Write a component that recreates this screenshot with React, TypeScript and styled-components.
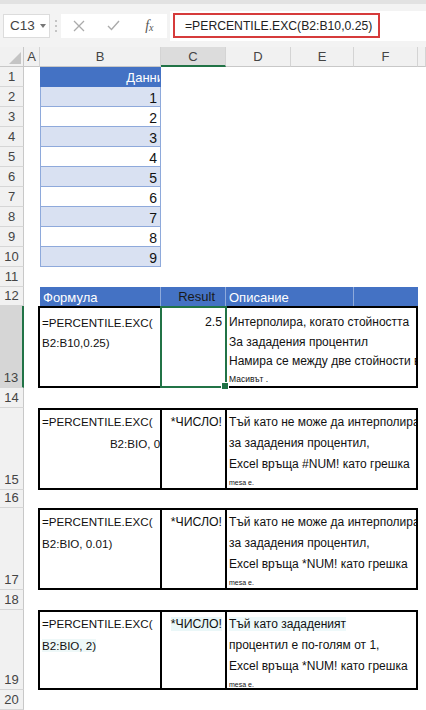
import React from 'react';
import styled, { createGlobalStyle } from 'styled-components';

const GlobalStyle = createGlobalStyle`
  html, body {
    margin: 0;
    padding: 0;
    background: #fff;
  }
  body {
    font-family: "Liberation Sans", Arial, sans-serif;
    overflow: hidden;
  }
`;

const Window = styled.div`
  width: 426px;
  height: 710px;
  overflow: hidden;
  display: flex;
  flex-direction: column;
  background: #fff;
`;

const TopStrip = styled.div`
  flex: none;
  height: 4px;
  background: #e2e2e2;
`;

const FormulaBar = styled.div`
  flex: none;
  height: 43px;
  display: flex;
  align-items: center;
  background: #f3f3f3;
`;

const NameBox = styled.div`
  width: 47px;
  height: 24px;
  margin-left: 3px;
  box-sizing: border-box;
  border: 1px solid #dcdcdc;
  background: #fff;
  display: flex;
  align-items: center;
  padding-left: 6px;
  gap: 5px;
  font-size: 13.5px;
  color: #444;
`;

const Caret = styled.span`
  width: 0;
  height: 0;
  border-left: 3.5px solid transparent;
  border-right: 3.5px solid transparent;
  border-top: 4px solid #777;
`;

const Grip = styled.div`
  width: 11px;
  height: 24px;
  display: flex;
  flex-direction: column;
  align-items: center;
  justify-content: center;
  gap: 3px;
  span {
    width: 2px;
    height: 2px;
    background: #c4c4c4;
  }
`;

const IconBox = styled.div`
  width: 106px;
  height: 24px;
  background: #fff;
  display: flex;
  align-items: center;
`;

const IconSlot = styled.div`
  width: 37px;
  display: flex;
  justify-content: center;
  align-items: center;
  color: #777;
`;

const Fx = styled.span`
  font-family: "Liberation Serif", serif;
  font-style: italic;
  font-size: 14px;
  color: #555;
  sub {
    font-size: 10px;
    vertical-align: -1px;
  }
`;

const FormulaInput = styled.div`
  flex: 1;
  height: 30px;
  margin-left: 3px;
  background: #fff;
  display: flex;
  align-items: center;
  padding-left: 3px;
`;

const Highlight = styled.div`
  width: 207px;
  height: 25px;
  box-sizing: border-box;
  border: 2.5px solid #d63b3b;
  display: flex;
  align-items: center;
  padding-left: 10px;
  font-size: 12.2px;
  color: #222;
  white-space: nowrap;
`;

const Sheet = styled.div`
  display: grid;
  grid-template-columns: 24px 16px 121px 65px 65px 63px 64px 8px;
  grid-template-rows:
    20px repeat(11, 20px) 19px 82px 20px 82px 18px 82px 20px 80px 20px;
`;

const Corner = styled.div`
  background: #f1f1f1;
  border-right: 1px solid #c8c8c8;
  border-bottom: 1px solid #c8c8c8;
  box-sizing: border-box;
`;

const ColHead = styled.div<{ $selected?: boolean }>`
  box-sizing: border-box;
  background: ${(p) => (p.$selected ? '#dcdcdc' : '#f1f1f1')};
  border-right: 1px solid #d4d4d4;
  border-bottom: ${(p) => (p.$selected ? '2px solid #217346' : '1px solid #c8c8c8')};
  display: flex;
  align-items: center;
  justify-content: center;
  font-size: 13px;
  color: #444;
`;

const RowHead = styled.div<{ $selected?: boolean }>`
  box-sizing: border-box;
  background: ${(p) => (p.$selected ? '#d6d6d6' : '#f1f1f1')};
  border-right: ${(p) => (p.$selected ? '2px solid #217346' : '1px solid #c8c8c8')};
  border-bottom: 1px solid #d6d6d6;
  display: flex;
  align-items: flex-end;
  justify-content: center;
  padding-bottom: 2px;
  font-size: 13px;
  color: #444;
`;

const Blank = styled.div``;

const Rest = styled.div<{ $from?: number }>`
  grid-column: ${(p) => p.$from ?? 4} / -1;
`;

const DataCell = styled.div<{ $band?: boolean; $head?: boolean }>`
  box-sizing: border-box;
  overflow: hidden;
  background: ${(p) => (p.$head ? '#4472c4' : p.$band ? '#d9e1f2' : '#fff')};
  border-left: 1px solid ${(p) => (p.$head ? '#4472c4' : '#8ea9db')};
  border-right: 1px solid ${(p) => (p.$head ? '#4472c4' : '#8ea9db')};
  border-bottom: 1px solid ${(p) => (p.$head ? '#4472c4' : '#8ea9db')};
  color: ${(p) => (p.$head ? '#fff' : '#111')};
  display: flex;
  align-items: center;
  justify-content: flex-end;
  padding: 2px 3px 0 0;
  font-size: ${(p) => (p.$head ? '13px' : '14px')};
  white-space: nowrap;
`;

const Overflow = styled.span<{ $by: number }>`
  display: inline-block;
  margin-right: -${(p) => p.$by}px;
`;

const HeadBar = styled.div`
  grid-column: 3 / 8;
  display: grid;
  grid-template-columns: 121px 65px 128px 64px;
  background: #4472c4;
`;

const HeadCell = styled.div<{ $dark?: boolean; $right?: boolean }>`
  box-sizing: border-box;
  border-right: 1px solid #8eaadb;
  display: flex;
  align-items: ${(p) => (p.$dark ? 'flex-start' : 'flex-end')};
  justify-content: ${(p) => (p.$right ? 'flex-end' : 'flex-start')};
  padding: ${(p) => (p.$dark ? '1px 10px 0 0' : '0 0 0 3px')};
  color: ${(p) => (p.$dark ? '#1a1a1a' : '#fff')};
  font-size: 13px;
  line-height: 17px;
  &:last-child {
    border-right: none;
  }
`;

const EntryBox = styled.div`
  grid-column: 3 / 8;
  margin-left: -2px;
  display: grid;
  grid-template-columns: 122px 65px minmax(0, 1fr);
  border: 2px solid #000;
  background: #fff;
  min-width: 0;
`;

const Column = styled.div<{ $tight?: boolean }>`
  min-width: 0;
  overflow: hidden;
  padding-top: ${(p) => (p.$tight ? 5 : 2)}px;
  color: #111;
`;

const FormulaCol = styled(Column)`
  border-right: 2px solid #000;
  padding-left: 2px;
  font-size: 11.6px;
`;

const ResultCol = styled(Column)<{ $selected?: boolean }>`
  position: relative;
  overflow: visible;
  font-size: 12.3px;
  text-align: right;
  padding-right: 3px;
  border-right: 2px solid #000;
  ${(p) =>
    p.$selected &&
    `
    border: 2px solid #217346;
    margin: -2px 0 -2px -2px;
    padding-top: 5px;
    z-index: 1;
  `}
`;

const FillHandle = styled.span`
  position: absolute;
  right: -4px;
  bottom: -4px;
  width: 6px;
  height: 6px;
  background: #217346;
  border: 1px solid #fff;
`;

const DescCol = styled(Column)`
  padding-left: 2px;
  font-size: 12px;
`;

const Line = styled.div<{ $h: number; $size?: number; $right?: boolean; $tint?: string }>`
  height: ${(p) => p.$h}px;
  line-height: ${(p) => p.$h}px;
  ${(p) => (p.$size ? `font-size: ${p.$size}px;` : '')}
  white-space: nowrap;
  text-align: ${(p) => (p.$right ? 'right' : 'left')};
  span.t {
    background: ${(p) => p.$tint ?? 'transparent'};
  }
`;

interface EntryProps {
  formula: [string, string];
  rightSecond?: boolean;
  result: string;
  lines: [string, string, string];
  note: string;
  tight?: boolean;
  selected?: boolean;
  tints?: { f2?: string; r?: string; d1?: string };
}

const Entry: React.FC<EntryProps> = ({ formula, rightSecond, result, lines, note, tight, selected, tints = {} }) => {
  const h = tight ? [19.5, 19.5, 19.5, 14] : [20, 23, 19, 18];
  return (
    <EntryBox>
      <FormulaCol $tight={tight}>
        <Line $h={h[0]}>{formula[0]}</Line>
        <Line $h={h[1]} $right={rightSecond} $tint={tints.f2}>
          {rightSecond ? <Overflow $by={4}>{formula[1]}</Overflow> : <span className="t">{formula[1]}</span>}
        </Line>
      </FormulaCol>
      <ResultCol $tight={tight} $selected={selected}>
        <Line $h={h[0]} $right $tint={tints.r}>
          <span className="t">{result}</span>
        </Line>
        {selected && <FillHandle />}
      </ResultCol>
      <DescCol $tight={tight}>
        <Line $h={h[0]} $tint={tints.d1}>
          <span className="t">{lines[0]}</span>
        </Line>
        <Line $h={h[1]}>{lines[1]}</Line>
        <Line $h={h[2]}>{lines[2]}</Line>
        <Line $h={h[3]} $size={tight ? 8.5 : 7}>
          {note}
        </Line>
      </DescCol>
    </EntryBox>
  );
};

const XIcon = () => (
  <svg width="12" height="12" viewBox="0 0 12 12">
    <path d="M1 1 L11 11 M11 1 L1 11" stroke="#ababab" strokeWidth="1.3" fill="none" />
  </svg>
);

const CheckIcon = () => (
  <svg width="13" height="11" viewBox="0 0 13 11">
    <path d="M1 6 L4.5 9.5 L12 1" stroke="#ababab" strokeWidth="1.4" fill="none" />
  </svg>
);

const values = [1, 2, 3, 4, 5, 6, 7, 8, 9];

const errLines: [string, string, string] = [
  'Тъй като не може да интерполира',
  'за зададения процентил,',
  'Excel връща #NUM! като грешка',
];

const App: React.FC = () => {
  return (
    <Window>
      <GlobalStyle />
      <TopStrip />
      <FormulaBar>
        <NameBox>
          C13
          <Caret />
        </NameBox>
        <Grip>
          <span />
          <span />
          <span />
        </Grip>
        <IconBox>
          <IconSlot>
            <XIcon />
          </IconSlot>
          <IconSlot>
            <CheckIcon />
          </IconSlot>
          <IconSlot>
            <Fx>
              f<sub>x</sub>
            </Fx>
          </IconSlot>
        </IconBox>
        <FormulaInput>
          <Highlight>=PERCENTILE.EXC(B2:B10,0.25)</Highlight>
        </FormulaInput>
      </FormulaBar>

      <Sheet>
        <Corner>
          <svg width="23" height="19" viewBox="0 0 23 19">
            <polygon points="21,5 21,17 9,17" fill="#c4c4c4" />
          </svg>
        </Corner>
        <ColHead>A</ColHead>
        <ColHead>B</ColHead>
        <ColHead $selected>C</ColHead>
        <ColHead>D</ColHead>
        <ColHead>E</ColHead>
        <ColHead>F</ColHead>
        <ColHead />

        <RowHead>1</RowHead>
        <Blank />
        <DataCell $head>
          <Overflow $by={7}>Данни</Overflow>
        </DataCell>
        <Rest />

        {values.map((v, i) => (
          <React.Fragment key={v}>
            <RowHead>{i + 2}</RowHead>
            <Blank />
            <DataCell $band={i % 2 === 0}>{v}</DataCell>
            <Rest />
          </React.Fragment>
        ))}

        <RowHead>11</RowHead>
        <Rest $from={2} />

        <RowHead>12</RowHead>
        <Blank />
        <HeadBar>
          <HeadCell>Формула</HeadCell>
          <HeadCell $dark $right>
            Result
          </HeadCell>
          <HeadCell>Описание</HeadCell>
          <HeadCell />
        </HeadBar>
        <Blank />

        <RowHead $selected>13</RowHead>
        <Blank />
        <Entry
          tight
          selected
          formula={['=PERCENTILE.EXC(', 'B2:B10,0.25)']}
          result="2.5"
          lines={['Интерполира, когато стойността', 'За зададения процентил', 'Намира се между две стойности в']}
          note="Масивът ."
        />
        <Blank />

        <RowHead>14</RowHead>
        <Rest $from={2} />

        <RowHead>15</RowHead>
        <Blank />
        <Entry
          formula={['=PERCENTILE.EXC(', 'B2:BIO, 0)']}
          rightSecond
          result="*ЧИСЛО!"
          lines={errLines}
          note="mesa e."
        />
        <Blank />

        <RowHead>16</RowHead>
        <Rest $from={2} />

        <RowHead>17</RowHead>
        <Blank />
        <Entry
          formula={['=PERCENTILE.EXC(', 'B2:BIO, 0.01)']}
          result="*ЧИСЛО!"
          lines={[errLines[0], errLines[1], 'Excel връща *NUM! като грешка']}
          note="mesa e."
        />
        <Blank />

        <RowHead>18</RowHead>
        <Rest $from={2} />

        <RowHead>19</RowHead>
        <Blank />
        <Entry
          formula={['=PERCENTILE.EXC(', 'B2:BIO, 2)']}
          result="*ЧИСЛО!"
          lines={['Тъй като зададеният', 'процентил е по-голям от 1,', 'Excel връща *NUM! като грешка']}
          note="mesa e."
          tints={{ f2: '#eef8f8', r: '#eaf7f8', d1: '#eef9fa' }}
        />
        <Blank />

        <RowHead>20</RowHead>
        <Rest $from={2} />
      </Sheet>
    </Window>
  );
};

export default App;
